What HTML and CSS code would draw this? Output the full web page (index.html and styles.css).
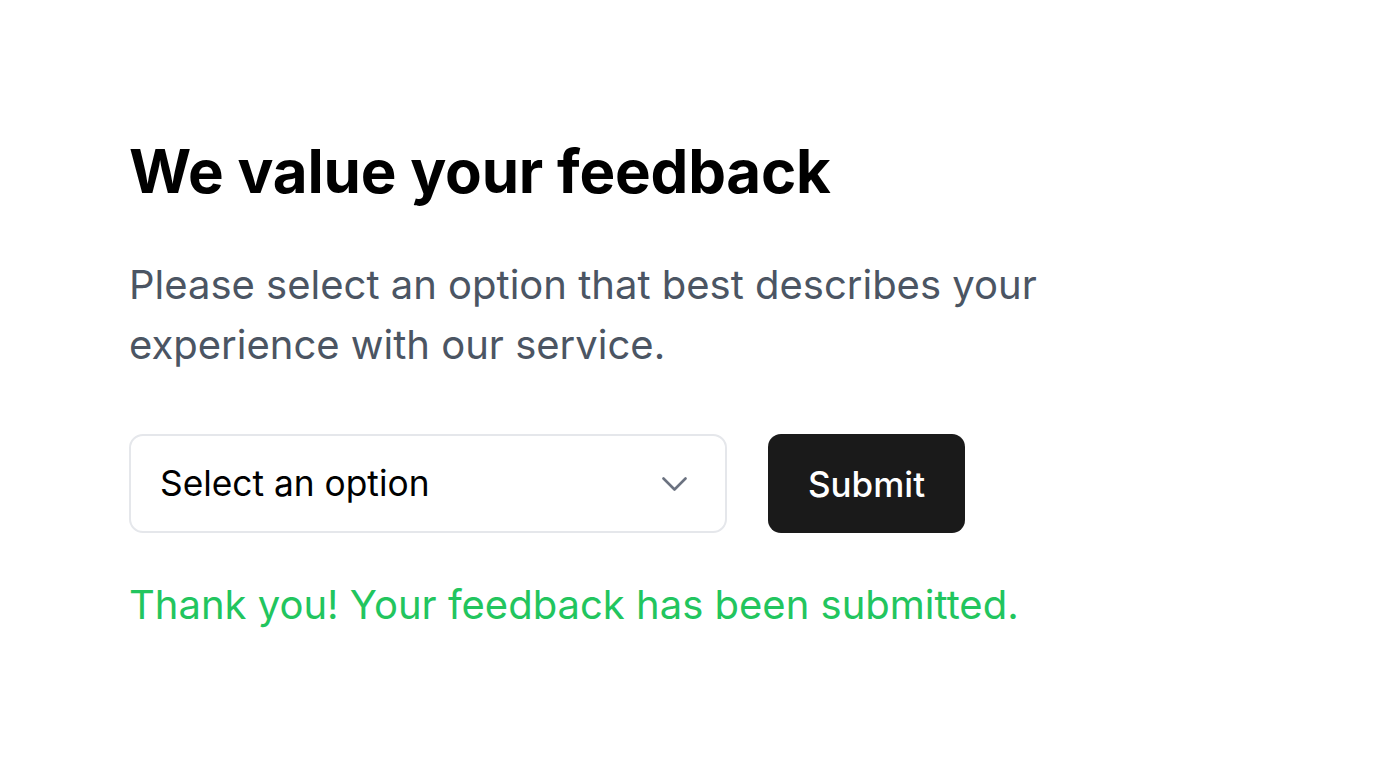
FILE: index.html
```html
<!DOCTYPE html>
<html lang="en">
<head>
<meta charset="utf-8">
<title>Feedback</title>
<link rel="stylesheet" href="styles.css">
</head>
<body>
<main class="page">
  <h1 class="title">We value your feedback</h1>
  <p class="lead">Please select an option that best describes your experience with our service.</p>
  <form class="form">
    <div class="select">
      <span class="select-text">Select an option</span>
      <svg class="chevron" width="26" height="16" viewBox="0 0 26 16" fill="none" stroke="currentColor" stroke-width="2.6" stroke-linecap="round" stroke-linejoin="round"><path d="M1.5 2.5 L12.5 13.5 L23.5 2.5"/></svg>
    </div>
    <button type="button" class="submit">Submit</button>
  </form>
  <p class="success">Thank you! Your feedback has been submitted.</p>
</main>
</body>
</html>
```

FILE: styles.css
```css
* { box-sizing: border-box; }
html, body { margin: 0; padding: 0; background: #ffffff; }
body { font-family: Inter, "Noto Sans", sans-serif; }
.page {
  padding: 135px 0 0 129px;
  display: flex;
  flex-direction: column;
  align-items: flex-start;
}
.title {
  margin: 0;
  font-size: 60px;
  line-height: 72px;
  font-weight: 700;
  color: #000;
  letter-spacing: -0.2px;
}
.lead {
  margin: 48px 0 0;
  width: 960px;
  font-size: 40px;
  line-height: 60px;
  color: #4b5563;
}
.form {
  margin-top: 59px;
  display: flex;
  gap: 41px;
}
.select {
  width: 598px;
  height: 99px;
  border: 2px solid #e5e7eb;
  border-radius: 14px;
  display: flex;
  align-items: center;
  justify-content: space-between;
  padding: 0 37px 0 29px;
  background: #fff;
}
.select-text { font-size: 35.3px; color: #000; }
.chevron { color: #6b7280; }
.submit {
  width: 197px;
  height: 99px;
  border: none;
  border-radius: 13px;
  background: #1a1a1a;
  color: #fff;
  font-family: inherit;
  font-size: 35px;
  font-weight: 500;
}
.success {
  margin: 42px 0 0;
  font-size: 40px;
  line-height: 60px;
  color: #22c55e;
}
```
